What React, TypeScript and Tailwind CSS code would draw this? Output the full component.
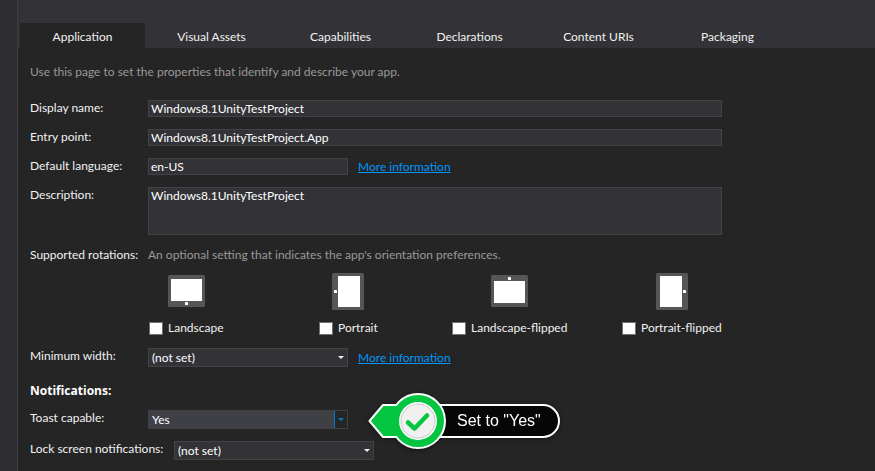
import type { ReactNode } from "react";

const tabs = ["Application", "Visual Assets", "Capabilities", "Declarations", "Content URIs", "Packaging"];

type Orientation = "landscape" | "portrait" | "landscape-flipped" | "portrait-flipped";

const rotations: { id: Orientation; label: string; column: string }[] = [
  { id: "landscape", label: "Landscape", column: "w-[170px]" },
  { id: "portrait", label: "Portrait", column: "w-[133px]" },
  { id: "landscape-flipped", label: "Landscape-flipped", column: "w-[170px]" },
  { id: "portrait-flipped", label: "Portrait-flipped", column: "w-[104px]" },
];

const fieldStyle = "border border-[#434346] bg-[#333337] text-white outline-none";

function DeviceIcon({ orientation }: { orientation: Orientation }) {
  if (orientation === "landscape" || orientation === "landscape-flipped") {
    const flipped = orientation === "landscape-flipped";
    return (
      <svg width="37" height="32" viewBox="0 0 37 32" aria-hidden="true">
        <rect width="37" height="32" rx="1.5" fill="#555658" />
        <rect x="3" y={flipped ? 6 : 4} width="31" height="22" fill="#fff" />
        <rect x="17" y={flipped ? 2 : 27} width="3" height="3" rx="0.6" fill="#fff" />
      </svg>
    );
  }
  const flipped = orientation === "portrait-flipped";
  return (
    <svg width="32" height="37" viewBox="0 0 32 37" aria-hidden="true">
      <rect width="32" height="37" rx="1.5" fill="#555658" />
      <rect x={flipped ? 4 : 6} y="3" width="22" height="31" fill="#fff" />
      <rect x={flipped ? 27 : 2} y="17" width="3" height="3" rx="0.6" fill="#fff" />
    </svg>
  );
}

function Row({ id, label, children }: { id: string; label: string; children: ReactNode }) {
  return (
    <div className="flex items-start">
      <label htmlFor={id} className="w-[118px] shrink-0 leading-4">
        {label}
      </label>
      {children}
    </div>
  );
}

function Dropdown({ id, value, options, active }: { id: string; value: string; options: string[]; active?: boolean }) {
  return (
    <div className="relative h-[19px] w-[200px] shrink-0">
      <select
        id={id}
        defaultValue={value}
        className={
          active
            ? "block h-full w-full appearance-none border border-[#3f3f46] bg-[#3f3f46] pl-[3px] leading-4 text-white outline-none"
            : "block h-full w-full appearance-none border border-[#434346] bg-[#333337] pl-[3px] leading-4 text-white outline-none"
        }
      >
        {options.map((o) => (
          <option key={o}>{o}</option>
        ))}
      </select>
      <span
        className={
          active
            ? "pointer-events-none absolute inset-y-px right-px flex w-[13px] items-center justify-center border-l border-[#007acc] bg-[#252526] text-[#007acc]"
            : "pointer-events-none absolute inset-y-px right-px flex w-[13px] items-center justify-center text-[#f1f1f1]"
        }
      >
        <svg width="6" height="3" viewBox="0 0 6 3" aria-hidden="true">
          <path d="M0 0h6L3 3z" fill="currentColor" />
        </svg>
      </span>
    </div>
  );
}

function MoreInformation() {
  return (
    <a href="#more" className="ml-2.5 self-center leading-[17px] text-[#0097fb] underline">
      More information
    </a>
  );
}

function Callout() {
  return (
    <div className="absolute -top-[19px] left-[337px] flex items-center whitespace-nowrap drop-shadow-[0_1px_2px_rgba(0,0,0,0.5)]">
      <svg className="relative z-10 shrink-0" width="80" height="60" viewBox="0 0 80 60" aria-hidden="true">
        <path d="M2.5 30 16 14H48V46H16Z" fill="#03c53f" stroke="#fff" strokeWidth="2" strokeLinejoin="round" />
        <circle cx="51" cy="30" r="27" fill="#03c53f" stroke="#fff" strokeWidth="2" />
        <path d="M17 15H46V45H17Z" fill="#03c53f" />
        <circle cx="51" cy="30" r="19" fill="#fff" />
        <circle cx="51" cy="30" r="17" fill="#f0f0f0" stroke="#c9c9c9" strokeWidth="1" />
        <path d="M41 31.5 47.5 37.5 60 24.5" fill="none" stroke="#03c53f" strokeWidth="4.5" strokeLinecap="round" strokeLinejoin="round" />
      </svg>
      <span className="-ml-6 flex h-[34px] items-center rounded-r-full border-2 border-white bg-[#060606] pr-[17px] pl-8 font-['Liberation_Sans',Arial,sans-serif] text-base text-white">
        Set to "Yes"
      </span>
    </div>
  );
}

export default function App() {
  return (
    <div className="flex min-h-screen bg-[#2d2d30] pl-[17px] font-['Lato','Open_Sans',sans-serif] text-[12px] leading-4 text-[#f1f1f1]">
      <div className="min-w-0 flex-1 border-l border-[#3f3f46] bg-[#252526]">
        <nav className="flex gap-1 bg-[#333337] pt-[23px] pl-0.5">
          {tabs.map((tab, i) => (
            <button
              key={tab}
              type="button"
              className={i === 0 ? "h-[25px] w-[125px] bg-[#252526] pt-0.5" : "h-[25px] w-[125px] pt-0.5"}
            >
              {tab}
            </button>
          ))}
        </nav>

        <main className="max-w-[704px] pt-4 pl-3">
          <p className="text-[#999999]">Use this page to set the properties that identify and describe your app.</p>

          <form className="mt-5">
            <div className="flex flex-col gap-3">
              <Row id="display-name" label="Display name:">
                <input id="display-name" defaultValue="Windows8.1UnityTestProject" className={`h-[17px] min-w-0 flex-1 px-0.5 ${fieldStyle}`} />
              </Row>
              <Row id="entry-point" label="Entry point:">
                <input id="entry-point" defaultValue="Windows8.1UnityTestProject.App" className={`h-[17px] min-w-0 flex-1 px-0.5 ${fieldStyle}`} />
              </Row>
              <Row id="language" label="Default language:">
                <input id="language" defaultValue="en-US" className={`h-[17px] w-[200px] px-0.5 ${fieldStyle}`} />
                <MoreInformation />
              </Row>
              <Row id="description" label="Description:">
                <textarea id="description" defaultValue="Windows8.1UnityTestProject" className={`block h-12 min-w-0 flex-1 resize-none px-0.5 leading-4 ${fieldStyle}`} />
              </Row>
            </div>

            <fieldset className="mt-3">
              <div className="flex">
                <span className="w-[118px] shrink-0">Supported rotations:</span>
                <span className="text-[#999999]">An optional setting that indicates the app's orientation preferences.</span>
              </div>
              <div className="mt-2.5 ml-[119px] flex">
                {rotations.map((r) => (
                  <div key={r.id} className={`shrink-0 ${r.column}`}>
                    <div className="inline-flex flex-col items-center gap-2.5">
                      <div className="flex h-[37px] items-center pb-px">
                        <DeviceIcon orientation={r.id} />
                      </div>
                      <label className="flex items-center gap-[5px] whitespace-nowrap">
                        <input type="checkbox" className="h-[13px] w-3.5 appearance-none border border-[#707070] bg-white" />
                        {r.label}
                      </label>
                    </div>
                  </div>
                ))}
              </div>
            </fieldset>

            <div className="mt-3">
              <Row id="min-width" label="Minimum width:">
                <Dropdown id="min-width" value="(not set)" options={["(not set)", "320px", "500px"]} />
                <MoreInformation />
              </Row>
            </div>

            <h2 className="mt-4 font-['Open_Sans','Noto_Sans',sans-serif] font-bold text-white">Notifications:</h2>
            <div className="relative mt-[11px]">
              <Row id="toast" label="Toast capable:">
                <Dropdown id="toast" value="Yes" options={["(not set)", "Yes", "No"]} active />
              </Row>
              <Callout />
            </div>
            <div className="mt-3 flex">
              <label htmlFor="lock-screen" className="w-36 shrink-0">
                Lock screen notifications:
              </label>
              <Dropdown id="lock-screen" value="(not set)" options={["(not set)", "Badge", "Badge and Tile Text"]} />
            </div>
          </form>
        </main>
      </div>
    </div>
  );
}
